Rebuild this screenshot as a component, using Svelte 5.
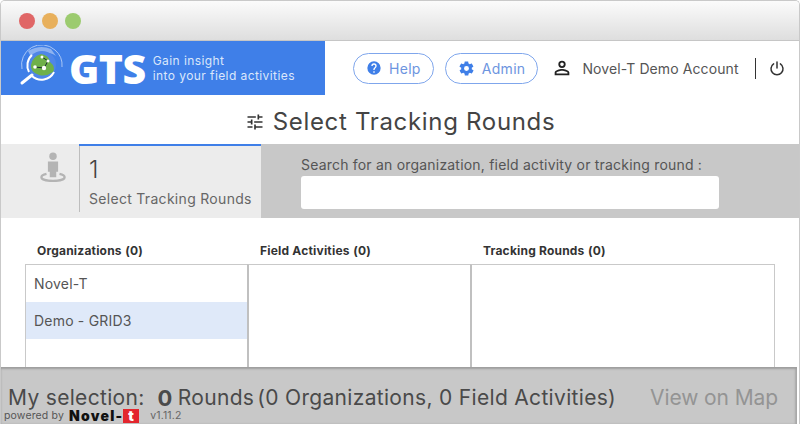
<script>
    const columns = [
        { title: "Organizations", count: 0, items: ["Novel-T", "Demo - GRID3"] },
        { title: "Field Activities", count: 0, items: [] },
        { title: "Tracking Rounds", count: 0, items: [] }
    ];
    const selected = "Demo - GRID3";
</script>

<div class="window">
    <div class="titlebar">
        <span class="dot red"></span>
        <span class="dot yellow"></span>
        <span class="dot green"></span>
    </div>

    <header>
        <div class="brand">
            <svg class="logo" width="48" height="46" viewBox="0 0 48 46">
                <path d="M4 24 A20 20 0 0 1 37 5 A20 20 0 0 1 44 22" fill="none" stroke="#a9c6f5" stroke-width="1"/>
                <path d="M10 6 Q22 -1 33 4 L38 11 Q26 3 13 12 Z" fill="#8db2f0"/>
                <circle cx="24" cy="20" r="14" fill="#4f86e8"/>
                <path d="M11 27 A14 14 0 0 1 14 10 M36 27 A14 14 0 0 1 14 31" fill="none" stroke="#fff" stroke-width="2"/>
                <path d="M13 20 Q14 12 23 9 Q31 10 32 17 Q38 22 35 27 Q28 32 21 30 Q12 27 13 20 Z" fill="#6fb04a"/>
                <path d="M17 22 L26 23 L30 16 L24 12" fill="none" stroke="#1c2b33" stroke-width="1"/>
                <circle cx="17" cy="22" r="1.800" fill="#fff"/>
                <circle cx="26" cy="23" r="2.200" fill="#fff"/>
                <circle cx="24" cy="12" r="1.500" fill="#fff"/>
                <circle cx="30" cy="16" r="1.500" fill="#fff"/>
                <path d="M14 30 L4 38" stroke="#fff" stroke-width="3" stroke-linecap="round"/>
            </svg>
            <span class="gts">GTS</span>
            <span class="tagline">Gain insight<br>into your field activities</span>
        </div>
        <div class="actions">
            <button class="pill">
                <svg width="16" height="16" viewBox="0 0 24 24"><path fill="#3f7fe8" d="M12 2a10 10 0 1 0 0 20 10 10 0 0 0 0-20zm1 17h-2v-2h2v2zm2.100-7.700-.9.9c-.8.7-1.200 1.300-1.200 2.800h-2v-.5c0-1.100.4-2.100 1.200-2.800l1.200-1.300c.4-.3.600-.8.600-1.400a2 2 0 0 0-4 0H8a4 4 0 0 1 8 0c0 .9-.4 1.700-.9 2.300z"/></svg>
                Help
            </button>
            <button class="pill">
                <svg width="17" height="17" viewBox="0 0 24 24"><path fill="#3f7fe8" d="M19.400 13c.1-.3.100-.7.100-1s0-.7-.1-1l2.100-1.600c.2-.1.200-.4.100-.6l-2-3.500c-.1-.2-.4-.3-.6-.2l-2.500 1a7.300 7.300 0 0 0-1.700-1l-.4-2.700c0-.2-.2-.4-.5-.4h-4c-.2 0-.4.200-.5.400l-.4 2.700c-.6.200-1.200.6-1.700 1l-2.500-1c-.2-.1-.5 0-.6.200l-2 3.500c-.1.200-.1.500.1.600L4.600 11c-.1.300-.1.700-.1 1s0 .7.100 1l-2.100 1.600c-.2.100-.2.400-.1.600l2 3.500c.1.200.4.300.6.200l2.500-1c.5.400 1.100.8 1.700 1l.4 2.700c.1.200.3.400.5.400h4c.3 0 .5-.2.500-.4l.4-2.700c.6-.2 1.200-.6 1.700-1l2.500 1c.2.100.5 0 .6-.2l2-3.500c.1-.2.100-.5-.1-.6L19.400 13zM12 15.500a3.500 3.500 0 1 1 0-7 3.500 3.500 0 0 1 0 7z"/></svg>
                Admin
            </button>
            <div class="user">
                <svg width="22" height="22" viewBox="0 0 24 24"><path fill="#222" d="M12 4a4 4 0 1 0 0 8 4 4 0 0 0 0-8zm0 2a2 2 0 1 1 0 4 2 2 0 0 1 0-4zm0 7c-2.700 0-8 1.300-8 4v3h16v-3c0-2.700-5.300-4-8-4zm-6 5v-1c.2-.7 3.300-2 6-2s5.800 1.300 6 2v1H6z"/></svg>
                <span>Novel-T Demo Account</span>
            </div>
            <div class="sep"></div>
            <svg class="power" width="18" height="18" viewBox="0 0 24 24"><path d="M12 4v8M7.500 6.500a8 8 0 1 0 9 0" fill="none" stroke="#333" stroke-width="2" stroke-linecap="round"/></svg>
        </div>
    </header>

    <h1>
        <svg width="20" height="20" viewBox="0 0 24 24"><path fill="#333" d="M3 17v2h6v-2H3zM3 5v2h10V5H3zm10 16v-2h8v-2h-8v-2h-2v6h2zM7 9v2H3v2h4v2h2V9H7zm14 4v-2H11v2h10zm-6-4h2V7h4V5h-4V3h-2v6z"/></svg>
        Select Tracking Rounds
    </h1>

    <section class="strip">
        <div class="step-icon">
            <svg width="26" height="30" viewBox="0 0 28 32">
                <circle cx="14" cy="4.500" r="4" fill="#b4b4b4"/>
                <path d="M8.500 10h11v11h-2v6h-7v-6h-2z" fill="#b4b4b4"/>
                <path d="M7 23.500C3.500 24.300 1.500 25.500 1.500 27c0 2.300 5.500 4 12.500 4s12.500-1.700 12.500-4c0-1.500-2-2.700-5.500-3.500" fill="none" stroke="#b4b4b4" stroke-width="2.500"/>
            </svg>
        </div>
        <div class="step">
            <div class="num">1</div>
            <div class="label">Select Tracking Rounds</div>
        </div>
        <div class="search">
            <label for="q">Search for an organization, field activity or tracking round :</label>
            <input id="q" type="text">
        </div>
    </section>

    <section class="lists">
        {#each columns as col}
            <div class="col">
                <div class="col-title"><b>{col.title}</b> <b>({col.count})</b></div>
                <ul>
                    {#each col.items as item}
                        <li class:active={item === selected}>{item}</li>
                    {/each}
                </ul>
            </div>
        {/each}
    </section>

    <footer>
        <div class="summary">
            <span>My selection:</span>
            <b>0</b>
            <span class="rounds">Rounds</span>
            <span class="detail">(0 Organizations, 0 Field Activities)</span>
        </div>
        <div class="map-link">View on Map</div>
        <div class="powered">
            <span>powered by</span>
            <span class="novel">Novel-<i>t</i></span>
            <span class="version">v1.11.2</span>
        </div>
    </footer>
</div>

<style>
    :global(body) {
        margin: 0;
        background: #fff;
    }

    .window {
        position: relative;
        width: 800px;
        height: 424px;
        box-sizing: border-box;
        overflow: hidden;
        border: 1px solid #c9c9c9;
        border-bottom: 0;
        border-radius: 5px 5px 0 0;
        font-family: Inter, "Noto Sans", sans-serif;
        color: #555;
    }

    .titlebar {
        height: 39px;
        display: flex;
        align-items: center;
        gap: 7px;
        padding-left: 18px;
        background: linear-gradient(#fbfbfb, #dedede);
        border-bottom: 1px solid #c6c6c6;
    }

    .dot {
        width: 16px;
        height: 16px;
        border-radius: 50%;
    }
    .red { background: #e06666; }
    .yellow { background: #e8b05c; }
    .green { background: #9ccb6f; }

    header {
        display: flex;
        height: 54px;
    }

    .brand {
        width: 324px;
        display: flex;
        align-items: center;
        background: #3f7fe8;
        color: #fff;
        padding-left: 17px;
        box-sizing: border-box;
    }

    .logo {
        flex: none;
    }

    .gts {
        font-family: "Open Sans", sans-serif;
        font-weight: 800;
        font-size: 41px;
        line-height: 1;
        margin-left: 3px;
        letter-spacing: -0.5px;
    }

    .tagline {
        margin-left: 7px;
        font-size: 12px;
        line-height: 15px;
        color: #dbe7fb;
        letter-spacing: 0.42px;
    }

    .actions {
        flex: 1;
        display: flex;
        align-items: center;
        padding-left: 28px;
    }

    .pill {
        display: flex;
        align-items: center;
        gap: 7px;
        height: 31px;
        margin-right: 11px;
        padding: 0 12px;
        border: 1px solid #7fa6ec;
        border-radius: 16px;
        background: #fff;
        color: #6d95e0;
        font: 14px Inter, sans-serif;
        letter-spacing: 0.3px;
    }

    .user {
        display: flex;
        align-items: center;
        gap: 9px;
        margin-left: 2px;
        font-size: 14px;
        color: #555;
        letter-spacing: 0.1px;
    }

    .sep {
        width: 1px;
        height: 21px;
        background: #333;
        margin: 0 12px 0 16px;
    }

    h1 {
        margin: 0;
        height: 49px;
        padding-top: 4px;
        box-sizing: border-box;
        display: flex;
        align-items: center;
        justify-content: center;
        gap: 8px;
        font-weight: 400;
        font-size: 24px;
        color: #444;
        letter-spacing: 0.68px;
    }

    .strip {
        display: flex;
        height: 74px;
        background: #c8c8c8;
    }

    .step-icon {
        width: 78px;
        background: #ececec;
        display: flex;
        justify-content: center;
        padding-top: 8px;
        padding-left: 26px;
        box-sizing: border-box;
    }

    .step {
        width: 182px;
        box-sizing: border-box;
        background: #ececec;
        border-top: 2px solid #3f7fe8;
        position: relative;
        padding-left: 10px;
    }
    .step::before {
        content: "";
        position: absolute;
        left: 0;
        top: 0;
        bottom: 6px;
        width: 1px;
        background: #bdbdbd;
    }

    .num {
        font-size: 24px;
        font-weight: 300;
        line-height: 26px;
        margin-top: 11px;
        color: #444;
    }

    .label {
        margin-top: 7px;
        font-size: 14px;
        color: #666;
        letter-spacing: 0.3px;
    }

    .search {
        padding: 12px 0 0 40px;
    }
    .search label {
        display: block;
        font-size: 14px;
        line-height: 17px;
        color: #555;
        letter-spacing: 0.2px;
    }
    .search input {
        display: block;
        width: 418px;
        height: 33px;
        margin-top: 3px;
        box-sizing: border-box;
        border: 0;
        border-radius: 3px;
        background: #fff;
    }

    .lists {
        display: flex;
        padding: 25px 0 0 24px;
    }

    .col {
        width: 223px;
    }

    .col-title {
        height: 21px;
        padding-left: 12px;
        font-size: 12px;
        line-height: 16px;
        color: #333;
        letter-spacing: 0.2px;
        white-space: nowrap;
    }

    ul {
        list-style: none;
        margin: 0;
        padding: 0;
        height: 110px;
        box-sizing: border-box;
        border: 1px solid #c9c9c9;
        border-right: 0;
        border-bottom: 0;
    }

    .col:nth-child(2) ul {
        margin-left: -1px;
        border-left: 2px solid #c0c0c0;
    }
    .col:last-child {
        width: 304px;
    }
    .col:last-child ul {
        margin-left: -1px;
        border-left: 2px solid #c0c0c0;
        border-right: 1px solid #c9c9c9;
    }

    li {
        height: 37px;
        line-height: 37px;
        padding-left: 8px;
        font-size: 14px;
        color: #555;
        letter-spacing: 0.2px;
    }
    li.active {
        background: #dfe9f9;
    }

    footer {
        position: absolute;
        left: 0;
        right: 2px;
        bottom: 0;
        height: 57px;
        background: #c8c8c8;
        box-shadow: inset 0 2px 2px #9f9f9f, inset -2px 0 2px #aaa;
    }

    .summary {
        position: absolute;
        left: 7px;
        top: 21px;
        display: flex;
        gap: 3px;
        font-size: 21px;
        line-height: 20px;
        color: #4a4a4a;
        white-space: nowrap;
        letter-spacing: 0.32px;
    }
    .summary b {
        margin-left: 10px;
        margin-right: 2px;
        font-size: 22px;
    }

    .map-link {
        position: absolute;
        right: 19px;
        top: 21px;
        font-size: 21px;
        line-height: 20px;
        letter-spacing: -0.1px;
        color: #949494;
    }

    .powered {
        position: absolute;
        left: 3px;
        bottom: 1px;
        display: flex;
        align-items: center;
        height: 14px;
        font-size: 10.5px;
        line-height: 14px;
        color: #555;
        letter-spacing: 0.15px;
    }
    .novel {
        margin-left: 5px;
        font-weight: 900;
        font-size: 14px;
        line-height: 14px;
        color: #111;
        letter-spacing: 1.2px;
    }
    .novel i {
        font-style: normal;
        display: inline-block;
        background: #e3262e;
        color: #fff;
        padding: 0 4px 0 5px;
        line-height: 14px;
    }
    .version {
        margin-left: 11px;
        color: #666;
    }
</style>
